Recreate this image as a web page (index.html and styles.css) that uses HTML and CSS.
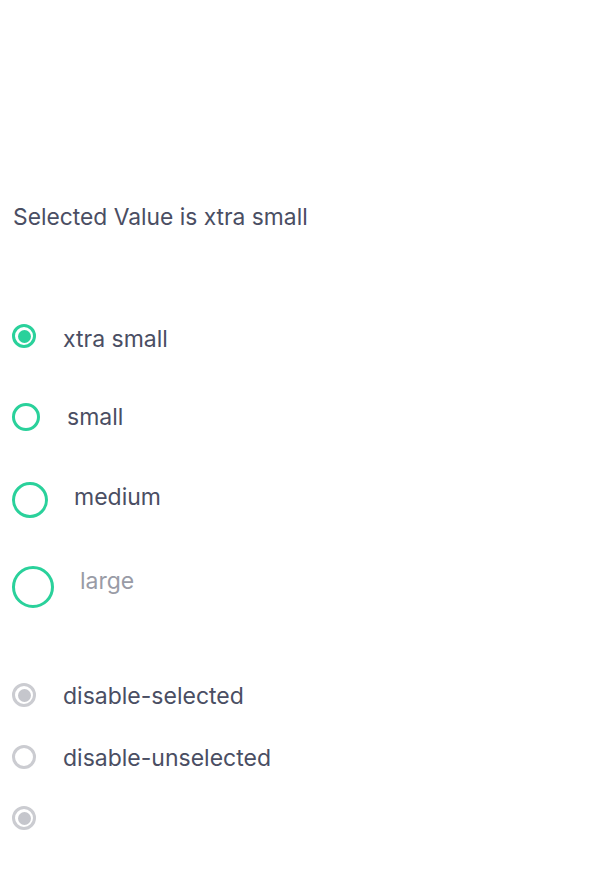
FILE: index.html
```html
<!DOCTYPE html>
<html>
<head>
<meta charset="utf-8">
<link rel="stylesheet" href="styles.css">
</head>
<body>
<main class="page">
  <p class="title">Selected Value is xtra small</p>
  <div class="row row-xs">
    <span class="radio radio-xs checked"><span class="dot"></span></span>
    <span class="label label-xs">xtra small</span>
  </div>
  <div class="row row-s">
    <span class="radio radio-s"></span>
    <span class="label label-s">small</span>
  </div>
  <div class="row row-m">
    <span class="radio radio-m"></span>
    <span class="label label-m">medium</span>
  </div>
  <div class="row row-l">
    <span class="radio radio-l"></span>
    <span class="label label-l">large</span>
  </div>
  <div class="row row-d1">
    <span class="radio radio-xs disabled checked"><span class="dot"></span></span>
    <span class="label label-d">disable-selected</span>
  </div>
  <div class="row row-d2">
    <span class="radio radio-xs disabled"></span>
    <span class="label label-d">disable-unselected</span>
  </div>
  <div class="row row-d3">
    <span class="radio radio-xs disabled checked"><span class="dot"></span></span>
  </div>
</main>
</body>
</html>
```
FILE: styles.css
```css
html, body {
  margin: 0;
  padding: 0;
  background: #ffffff;
}
.page {
  padding: 0 0 0 12px;
  font-family: "Inter", "Noto Sans", sans-serif;
  color: #4a4e63;
  font-size: 23px;
  display: flex;
  flex-direction: column;
}
.title {
  margin: 203px 0 0 1px;
  line-height: 28px;
  font-size: 22.8px;
}
.row {
  display: flex;
  align-items: center;
  min-height: 28px;
}
.row-xs { margin-top: 91px; }
.row-s { margin-top: 53px; }
.row-m { margin-top: 51px; }
.row-l { margin-top: 48px; }
.row-d1 { margin-top: 73px; }
.row-d2 { margin-top: 34px; }
.row-d3 { margin-top: 33px; }
.radio {
  box-sizing: border-box;
  border: 3px solid #2ad19b;
  border-radius: 50%;
  display: flex;
  align-items: center;
  justify-content: center;
  flex: none;
}
.radio-xs { width: 24px; height: 24px; }
.radio-s { width: 28px; height: 28px; }
.radio-m { width: 36px; height: 36px; }
.radio-l { width: 42px; height: 42px; }
.dot {
  width: 13px;
  height: 13px;
  border-radius: 50%;
  background: #2ad19b;
}
.radio.disabled {
  border-color: #cbccd1;
}
.radio.disabled .dot {
  background: #c5c6cc;
}
.label {
  margin-left: 27px;
  line-height: 28px;
}
.label-xs { margin-top: 3px; margin-bottom: -3px; }
.label-d { margin-top: 1px; margin-bottom: -1px; }
.label-s { margin-left: 27px; }
.label-m { margin-left: 26px; margin-bottom: 6px; }
.label-l { margin-left: 26px; margin-bottom: 12px; color: #999ba6; }
```
